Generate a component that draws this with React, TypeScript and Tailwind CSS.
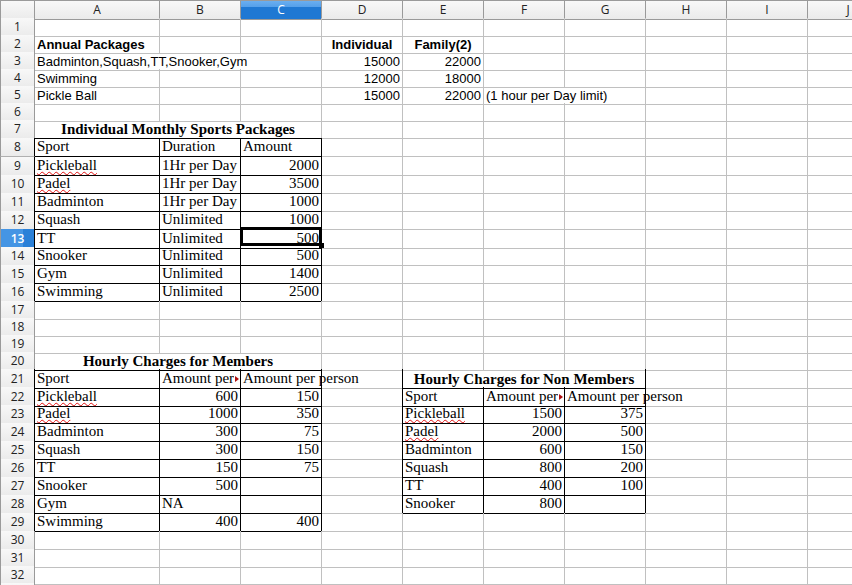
import React from "react";

type Align = "l" | "r" | "c";
type Cell = {
  t: string;
  a?: Align;
  f?: "sans" | "serif" | "title";
  b?: boolean;
  w?: boolean;
  span?: number;
  ov?: boolean;
  clip?: boolean;
};

const LETTERS = ["A", "B", "C", "D", "E", "F", "G", "H", "I", "J"];
const GRID =
  "grid grid-cols-[35px_125px_81px_81px_81px_81px_81px_81px_81px_81px_81px] w-[889px]";

function rowH(r: number): number {
  if (r <= 6) return 17;
  if (r === 7) return 18;
  if (r === 8) return 19;
  if (r <= 16) return 18;
  if (r <= 20) return 17;
  if (r <= 30) return 18;
  return 17;
}
const H_CLASS: Record<number, string> = {
  17: "h-[17px]",
  18: "h-[18px]",
  19: "h-[19px]",
};

const cells: Record<string, Cell> = {};
const put = (r: number, c: number, cell: Cell) => {
  cells[`${r}:${c}`] = cell;
};

// Top section (sans)
put(2, 1, { t: "Annual Packages", f: "sans", b: true });
put(3, 1, { t: "Badminton,Squash,TT,Snooker,Gym", f: "sans", ov: true });
put(4, 1, { t: "Swimming", f: "sans" });
put(5, 1, { t: "Pickle Ball", f: "sans" });
put(2, 4, { t: "Individual", f: "sans", b: true, a: "c" });
put(2, 5, { t: "Family(2)", f: "sans", b: true, a: "c" });
put(3, 4, { t: "15000", f: "sans", a: "r" });
put(3, 5, { t: "22000", f: "sans", a: "r" });
put(4, 4, { t: "12000", f: "sans", a: "r" });
put(4, 5, { t: "18000", f: "sans", a: "r" });
put(5, 4, { t: "15000", f: "sans", a: "r" });
put(5, 5, { t: "22000", f: "sans", a: "r" });
put(5, 6, { t: "(1 hour per Day limit)", f: "sans", ov: true });

// Table 1
put(7, 1, { t: "Individual Monthly Sports Packages", f: "title", b: true, span: 3, a: "c" });
put(8, 1, { t: "Sport", f: "serif" });
put(8, 2, { t: "Duration", f: "serif" });
put(8, 3, { t: "Amount", f: "serif" });
const t1: [string, string, string, boolean][] = [
  ["Pickleball", "1Hr per Day", "2000", true],
  ["Padel", "1Hr per Day", "3500", true],
  ["Badminton", "1Hr per Day", "1000", false],
  ["Squash", "Unlimited", "1000", false],
  ["TT", "Unlimited", "500", false],
  ["Snooker", "Unlimited", "500", false],
  ["Gym", "Unlimited", "1400", false],
  ["Swimming", "Unlimited", "2500", false],
];
t1.forEach(([s, d, a, w], i) => {
  put(9 + i, 1, { t: s, f: "serif", w });
  put(9 + i, 2, { t: d, f: "serif" });
  put(9 + i, 3, { t: a, f: "serif", a: "r" });
});

// Table 2
put(20, 1, { t: "Hourly Charges for Members", f: "title", b: true, span: 3, a: "c" });
put(21, 1, { t: "Sport", f: "serif" });
put(21, 2, { t: "Amount per person", f: "serif", clip: true });
put(21, 3, { t: "Amount per person", f: "serif", ov: true });
const t2: [string, string, string, boolean, Align?][] = [
  ["Pickleball", "600", "150", true],
  ["Padel", "1000", "350", true],
  ["Badminton", "300", "75", false],
  ["Squash", "300", "150", false],
  ["TT", "150", "75", false],
  ["Snooker", "500", "", false],
  ["Gym", "NA", "", false, "l"],
  ["Swimming", "400", "400", false],
];
t2.forEach(([s, x, y, w, al], i) => {
  put(22 + i, 1, { t: s, f: "serif", w });
  if (x) put(22 + i, 2, { t: x, f: "serif", a: al ?? "r" });
  if (y) put(22 + i, 3, { t: y, f: "serif", a: "r" });
});

// Table 3
put(21, 5, { t: "Hourly Charges for Non Members", f: "title", b: true, span: 3, a: "c" });
put(22, 5, { t: "Sport", f: "serif" });
put(22, 6, { t: "Amount per person", f: "serif", clip: true });
put(22, 7, { t: "Amount per person", f: "serif", ov: true });
const t3: [string, string, string, boolean][] = [
  ["Pickleball", "1500", "375", true],
  ["Padel", "2000", "500", true],
  ["Badminton", "600", "150", false],
  ["Squash", "800", "200", false],
  ["TT", "400", "100", false],
  ["Snooker", "800", "", false],
];
t3.forEach(([s, x, y, w], i) => {
  put(23 + i, 5, { t: s, f: "serif", w });
  put(23 + i, 6, { t: x, f: "serif", a: "r" });
  if (y) put(23 + i, 7, { t: y, f: "serif", a: "r" });
});

// Black border edges
const V = new Set<string>(); // right edge of column c in row r
const HZ = new Set<string>(); // bottom edge of row r in column c
function table(r1: number, r2: number, c1: number, c2: number) {
  for (let r = r1; r <= r2; r++) for (let c = c1 - 1; c <= c2; c++) V.add(`${r}:${c}`);
  for (let c = c1; c <= c2; c++) for (let r = r1 - 1; r <= r2; r++) HZ.add(`${r}:${c}`);
}
table(8, 16, 1, 3);
table(21, 29, 1, 3);
table(22, 28, 5, 7);
V.add("21:4");
V.add("21:7");

// Gridlines hidden by overflowing text
const SUPPRESS = new Set<string>(["3:1", "3:2", "5:6"]);

const SANS = "font-['Liberation_Sans',Arial,sans-serif] text-[13px] leading-[17px]";
const SERIF = "font-['Liberation_Serif','Times_New_Roman',serif] text-[15px] leading-[19px]";
const TITLE = "font-['Liberation_Serif','Times_New_Roman',serif] text-[15px] leading-[17px]";

const HEAD_BG = "bg-[linear-gradient(to_bottom,#f8f8f8,#ebebeb)]";
const HEAD_SEL =
  "bg-[linear-gradient(to_bottom,#6aaef0_0%,#55a0ea_33%,#1f78d3_34%,#1f78d3_100%)]";
const ROW_SEL =
  "bg-[linear-gradient(to_right,#4595e4_0%,#4595e4_66%,#2a80d8_67%,#2a80d8_100%)]";
const HEAD_FONT = "font-['Open_Sans','Noto_Sans',sans-serif] text-[12px]";

function renderCell(r: number, c: number, cell: Cell | undefined, span: number) {
  const lastCol = c + span - 1;
  const vKey = `${r}:${lastCol}`;
  const rightColor = V.has(vKey)
    ? "border-r-black"
    : SUPPRESS.has(vKey)
    ? "border-r-transparent"
    : "border-r-[#c0c0c0]";
  const bottomColor = HZ.has(`${r}:${c}`) ? "border-b-black" : "border-b-[#c0c0c0]";
  const selected = r === 13 && c === 3;
  const font = cell
    ? cell.f === "sans"
      ? SANS
      : cell.f === "title"
      ? TITLE
      : SERIF
    : "";
  const justify =
    cell?.a === "r" ? "justify-end" : cell?.a === "c" ? "justify-center" : "justify-start";
  const visible = cell?.ov || selected || cell?.a === "c";
  const spanCls = span === 3 ? "col-span-3" : "";

  let content: React.ReactNode = null;
  if (cell) {
    const textCls = `whitespace-nowrap shrink-0 ${cell.b ? "font-bold" : ""} ${
      cell.w
        ? "underline decoration-wavy decoration-[#e01010] decoration-1 underline-offset-[1px]"
        : ""
    }`;
    if (cell.clip) {
      content = (
        <>
          <span className="block w-[72px] overflow-hidden whitespace-nowrap">{cell.t}</span>
          <svg
            className="absolute right-[1px] bottom-[6px]"
            width="4"
            height="6"
            viewBox="0 0 4 6"
          >
            <polygon points="0,0 4,3 0,6" fill="#b01010" />
          </svg>
        </>
      );
    } else {
      content = <span className={textCls}>{cell.t}</span>;
    }
  }

  return (
    <div
      key={`${r}:${c}`}
      className={`relative flex items-end min-w-0 px-[2px] border-r border-b text-black ${rightColor} ${bottomColor} ${spanCls} ${justify} ${font} ${
        visible ? "overflow-visible" : "overflow-hidden"
      }`}
    >
      {content}
      {cell?.ov && V.has(vKey) ? (
        <span className="absolute top-0 -right-px w-px h-full bg-black z-10" />
      ) : null}
      {selected ? (
        <>
          <span className="absolute -left-px -top-[2px] w-[82px] h-[19px] border-[3px] border-black z-20" />
          <span className="absolute left-[78px] top-[14px] w-[5px] h-[5px] bg-black z-20" />
        </>
      ) : null}
    </div>
  );
}

function Row({ r }: { r: number }) {
  const h = rowH(r);
  const items: React.ReactNode[] = [];
  const rowSel = r === 13;
  items.push(
    <div
      key="hdr"
      className={`flex items-center justify-center border-l border-r border-b border-l-[#9a9a9a] border-b-[#b0b0b0] ${
        V.has(`${r}:0`) ? "border-r-black" : "border-r-[#9a9a9a]"
      } ${HEAD_FONT} ${rowSel ? `${ROW_SEL} text-white font-semibold` : `${HEAD_BG} text-[#222]`}`}
    >
      {r}
    </div>
  );
  let c = 1;
  while (c <= 10) {
    const cell = cells[`${r}:${c}`];
    const span = cell?.span ?? 1;
    items.push(renderCell(r, c, cell, span));
    c += span;
  }
  return <div className={`${GRID} ${H_CLASS[h]}`}>{items}</div>;
}

export default function App() {
  const rows = Array.from({ length: 33 }, (_, i) => i + 1);
  return (
    <div className="relative w-[852px] h-[585px] overflow-hidden bg-white">
      <div className={`${GRID} h-[18px]`}>
        <div className={`border border-[#9a9a9a] ${HEAD_BG}`} />
        {LETTERS.map((l) => (
          <div
            key={l}
            className={`flex items-center justify-center border-t border-r border-b border-[#9a9a9a] ${HEAD_FONT} ${
              l === "C" ? `${HEAD_SEL} text-white` : `${HEAD_BG} text-[#222]`
            }`}
          >
            {l}
          </div>
        ))}
      </div>
      {rows.map((r) => (
        <Row key={r} r={r} />
      ))}
    </div>
  );
}
